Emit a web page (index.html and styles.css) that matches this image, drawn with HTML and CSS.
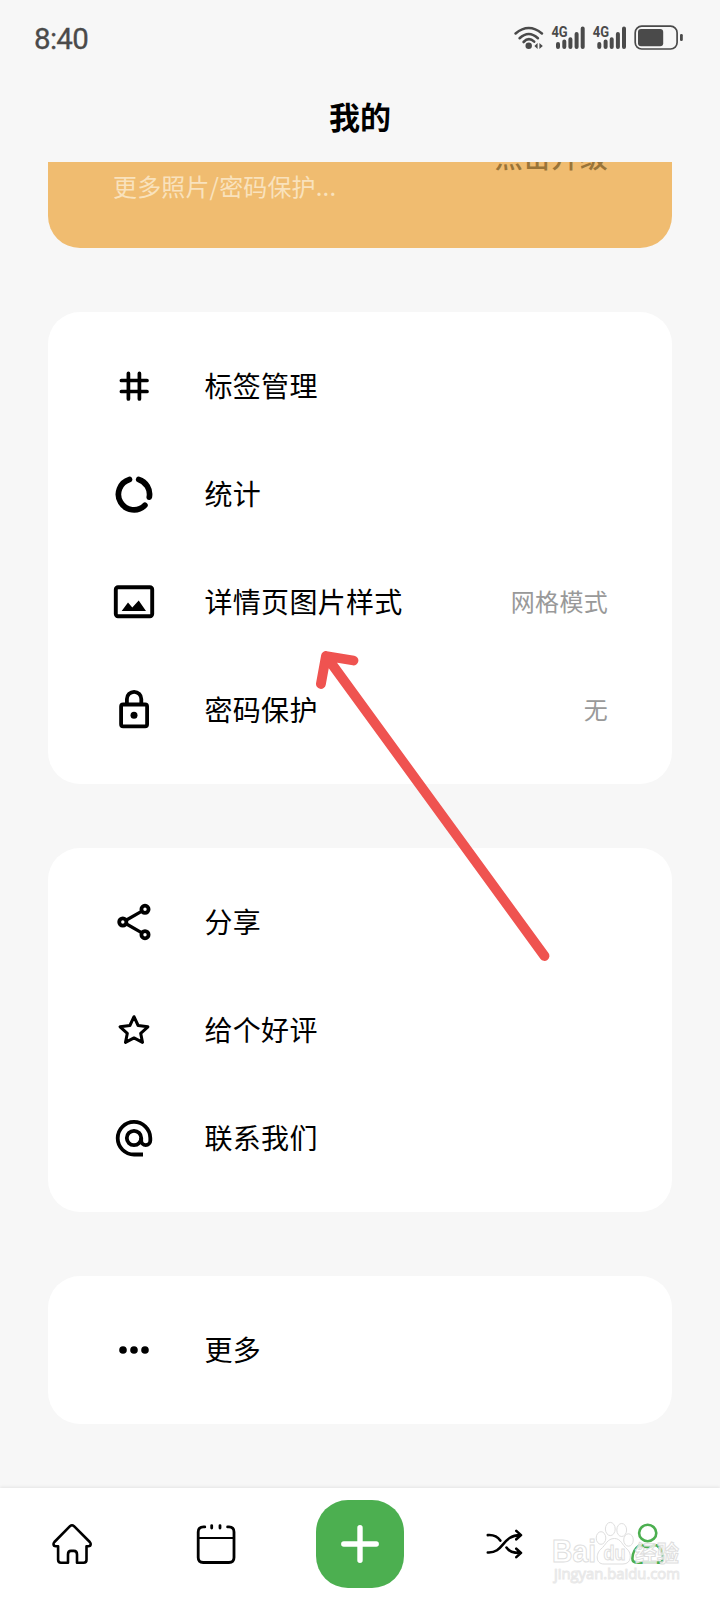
FILE: index.html
```html
<!DOCTYPE html>
<html lang="zh-CN">
<head>
<meta charset="utf-8">
<title>我的</title>
<link rel="stylesheet" href="styles.css">
</head>
<body>
<div class="phone">
  <header class="status">
    <span class="time">8:40</span>
    <svg class="status-icons" width="176" height="32" viewBox="510 22 176 32">
      <g class="s-line">
        <path d="M515.600 33.400Q528.700 22.600 541.900 33.400" stroke-width="2.600"/>
        <path d="M519.600 38.200Q528.700 29.800 537.900 38.200" stroke-width="2.600"/>
        <path d="M523.600 42Q528.700 36.600 534.200 41.600" stroke-width="2.600"/>
      </g>
      <circle cx="528.700" cy="45.800" r="3.200"/>
      <path d="M537.600 43v6l-3.200-3zM539.400 43v6l3.400-3z"/>
      <g id="signal">
        <text class="net" x="551.400" y="37.400" textLength="16.300" lengthAdjust="spacingAndGlyphs">4G</text>
        <g class="s-line" stroke-width="4">
          <path d="M558 43.900V47.100M564.300 41.600V47.100M570.400 39.300V47.100M576.600 34V47.100M582.700 28.600V47.100"/>
        </g>
      </g>
      <use href="#signal" x="41.300"/>
      <rect x="635.200" y="26.200" width="41.900" height="22.800" rx="6.500" fill="none" stroke="#4a4a4a" stroke-width="1.700"/>
      <rect x="638" y="29" width="25.200" height="17.300" rx="3"/>
      <rect x="680" y="34" width="2.800" height="7" rx="1.300"/>
    </svg>
  </header>
  <h1 class="title">我的</h1>

  <main class="scroll">
    <section class="banner">
      <span class="banner-sub">更多照片/密码保护...</span>
      <span class="banner-action">点击升级</span>
    </section>

    <section class="card">
      <div class="row">
        <svg class="icon" viewBox="0 0 48 48"><path stroke-width="3.700" d="M18.400 11.400V37M29.400 11.400V37M11.400 18.500H37M11.400 29.500H37"/></svg>
        <span class="label">标签管理</span>
      </div>
      <div class="row">
        <svg class="icon" viewBox="0 0 48 48"><path stroke-width="5.700" d="M28.700 9.500A15.500 15.500 0 0 1 39.300 27.100M34.900 35.300A15.500 15.500 0 1 1 19.500 9.500"/></svg>
        <span class="label">统计</span>
      </div>
      <div class="row">
        <svg class="icon" viewBox="0 0 48 48"><rect x="5.800" y="9.200" width="36.400" height="29" rx="2.200" stroke-width="3.900"/><path class="solid" d="M11.700 33 18 24.500 22.300 29.500 28.700 22.500 36 33z"/></svg>
        <span class="label">详情页图片样式</span>
        <span class="value">网格模式</span>
      </div>
      <div class="row">
        <svg class="icon" viewBox="0 0 48 48"><g stroke-width="3.800"><rect x="11.100" y="18.500" width="26" height="21.800" rx="2"/><path d="M16.900 18V13a7.200 7.200 0 0 1 14.400 0v5"/></g><circle class="solid" cx="24" cy="29.300" r="3.500"/></svg>
        <span class="label">密码保护</span>
        <span class="value">无</span>
      </div>
    </section>

    <section class="card">
      <div class="row">
        <svg class="icon" viewBox="0 0 48 48"><g stroke-width="3.800"><circle cx="12.800" cy="24" r="3.600"/><circle cx="35" cy="11.300" r="3.600"/><circle cx="35" cy="36.700" r="3.600"/></g><path stroke-width="3.200" d="M16.500 22 31.500 13.400M16.500 26 31.500 34.700"/></svg>
        <span class="label">分享</span>
      </div>
      <div class="row">
        <svg class="icon" viewBox="0 0 48 48"><path stroke-width="3" d="M24 10.700 28.100 19.500 37.900 20.800 30.700 27.400 32.500 36.400 24 31.900 15.500 36.400 17.300 27.400 10.100 20.800 19.900 19.500z"/></svg>
        <span class="label">给个好评</span>
      </div>
      <div class="row">
        <svg class="icon" viewBox="0 0 48 48"><g class="butt" stroke-width="3.800"><circle cx="24" cy="24" r="7.200"/><path d="M33 40.500H24A16.300 16.300 0 1 1 40.300 24V26.500a4.550 4.550 0 0 1-9.100 0V24"/></g></svg>
        <span class="label">联系我们</span>
      </div>
    </section>

    <section class="card">
      <div class="row">
        <svg class="icon" viewBox="0 0 48 48"><g class="solid"><circle cx="13" cy="24" r="3.800"/><circle cx="24" cy="24" r="3.800"/><circle cx="35" cy="24" r="3.800"/></g></svg>
        <span class="label">更多</span>
      </div>
    </section>
  </main>

  <nav class="tabs">
    <a class="tab"><svg class="icon" viewBox="0 0 48 48"><path stroke-width="2.600" d="M20 42.800H13Q10.100 42.800 10.100 39.800V26.300H8Q5.500 26.300 5.500 24Q5.500 23 6.400 22L22 6.200Q24 4.300 26 6.200L41.800 22Q42.700 23 42.700 24Q42.700 26.300 40.200 26.300H38.500V39.800Q38.500 42.800 35.600 42.800H29V34.500Q29 30.900 25.800 30.900H23Q20 30.900 20 34.500V42.800"/></svg></a>
    <a class="tab"><svg class="icon" viewBox="0 0 48 48"><path stroke-width="2.800" d="M12.800 6.900H11.500Q6.200 6.900 6.200 12V37.500Q6.200 42.500 11.200 42.500H37Q42 42.500 42 37.500V12Q42 6.900 37 6.900H35.600M19.700 5.600V8.100M28 5.600V8.100"/><path stroke-width="2.200" d="M6.200 18H42"/></svg></a>
    <a class="tab"><span class="add"><svg class="icon plus" viewBox="0 0 48 48"><path stroke-width="5.400" d="M24 7.800V40.200M7.800 24H40.200"/></svg></span></a>
    <a class="tab"><svg class="icon" viewBox="0 0 48 48"><path stroke-width="2.600" d="M7.800 15.100C14 14.600 17.500 16.500 20.300 20.600M7.800 32.500C24 33.500 22 14.900 40.300 15.100M26.500 27.500C29.500 31.700 32.500 32.900 40.300 32.900M36.300 10.900 41 15.100 36.300 19.300M36.300 28.700 41 32.900 36.300 37.100"/></svg></a>
    <a class="tab active"><svg class="icon" viewBox="0 0 48 48"><g stroke-width="2.600"><ellipse cx="23.700" cy="13" rx="8.600" ry="8.200"/><path d="M15.500 25.200Q8.500 30 8.400 38.500Q8.400 42.600 13 42.600H35Q39.100 42.600 39.100 38.500Q39 29.500 32.500 25.200L30 25Q24 29.500 18 25z"/></g></svg></a>
  </nav>

  <svg class="arrow" viewBox="310 640 250 330" width="250" height="330"><path d="M544.500 956 326 656M353.500 660.500 326 656 320.900 684"/></svg>

  <svg class="watermark" viewBox="548 1516 140 70" width="140" height="70">
    <text class="wm-brand" x="552" y="1562" textLength="44" lengthAdjust="spacingAndGlyphs">Bai</text>
    <g class="wm-paw">
      <ellipse cx="601" cy="1538" rx="4.800" ry="6.300"/>
      <ellipse cx="610.300" cy="1529" rx="4.900" ry="6.600"/>
      <ellipse cx="621.700" cy="1530" rx="4.900" ry="6.500"/>
      <ellipse cx="628.500" cy="1540" rx="4.800" ry="6.200"/>
      <path d="M614.500 1538.500C621 1538.500 622 1545 627 1549C632 1553 632 1564 623 1564H604C595 1564 596 1553 601 1549C606 1545 607 1538.500 614.500 1538.500z"/>
    </g>
    <text class="wm-du" x="603.500" y="1560" textLength="22" lengthAdjust="spacingAndGlyphs">du</text>
    <text class="wm-cn" x="635" y="1561" textLength="44" lengthAdjust="spacingAndGlyphs">经验</text>
    <text class="wm-url" x="554" y="1579" textLength="126" lengthAdjust="spacingAndGlyphs">jingyan.baidu.com</text>
  </svg>
</div>
</body>
</html>
```

FILE: styles.css
```css
* {
  box-sizing: border-box;
}

body {
  margin: 0;
  font-family: "Noto Sans CJK SC", sans-serif;
  color: #000;
}

.phone {
  position: relative;
  display: flex;
  flex-direction: column;
  width: 720px;
  height: 1600px;
  overflow: hidden;
  background: #f7f7f7;
}

.status {
  display: flex;
  justify-content: space-between;
  align-items: center;
  height: 76px;
  padding: 0 34px;
}

.time {
  font: 400 29.5px/36px Roboto, sans-serif;
  letter-spacing: -0.7px;
  color: #4a4a4a;
  -webkit-text-stroke: 0.3px #4a4a4a;
  padding-top: 2px;
}

.status-icons {
  fill: #4a4a4a;
}

.s-line {
  fill: none;
  stroke: #4a4a4a;
  stroke-linecap: round;
}

.net {
  font: 700 14.5px Roboto, sans-serif;
}

.title {
  height: 86px;
  margin: 0;
  font-size: 31px;
  font-weight: 700;
  line-height: 80px;
  text-align: center;
}

.scroll {
  flex: 1;
  display: flex;
  flex-direction: column;
  gap: 64px;
  min-height: 0;
  padding: 0 48px;
  overflow: hidden;
}

.banner {
  display: flex;
  flex: none;
  justify-content: space-between;
  align-items: center;
  height: 180px;
  margin-top: -94px;
  padding: 0 64px 0 65px;
  border-radius: 32px;
  background: #f0bc70;
}

.banner-sub {
  padding-top: 56px;
  font-size: 24px;
  line-height: 36px;
  letter-spacing: 0.15px;
  color: #f9e2bd;
}

.banner-action {
  padding-bottom: 5px;
  font-size: 28px;
  font-weight: 500;
  line-height: 40px;
  letter-spacing: 0.3px;
  color: #997439;
}

.card {
  flex: none;
  padding: 20px 64px 20px 62px;
  border-radius: 32px;
  background: #fff;
}

.row {
  display: flex;
  align-items: center;
  height: 108px;
}

.icon {
  flex: none;
  width: 48px;
  height: 48px;
  fill: none;
  stroke: #000;
  stroke-linecap: round;
  stroke-linejoin: round;
}

.solid {
  fill: #000;
  stroke: none;
}

.butt {
  stroke-linecap: butt;
}

.label {
  flex: 1;
  margin-left: 46.5px;
  padding-bottom: 2px;
  font-size: 28px;
  line-height: 40px;
  letter-spacing: 0.3px;
}

.value {
  padding-bottom: 2px;
  font-size: 24px;
  line-height: 36px;
  letter-spacing: 0.3px;
  color: #999;
}

.tabs {
  display: grid;
  grid-template-columns: repeat(5, 1fr);
  height: 112px;
  background: #fff;
  box-shadow: 0 -1px 3px rgba(0, 0, 0, 0.08);
}

.tab {
  display: flex;
  justify-content: center;
  align-items: center;
}

.add {
  display: flex;
  justify-content: center;
  align-items: center;
  width: 88px;
  height: 88px;
  border-radius: 32px;
  background: #4caf50;
}

.plus {
  stroke: #fff;
}

.active .icon {
  stroke: #4caf50;
}

.arrow {
  position: absolute;
  left: 310px;
  top: 640px;
  fill: none;
  stroke: #ef5350;
  stroke-width: 9.8px;
  stroke-linecap: round;
  stroke-linejoin: round;
}

.watermark {
  position: absolute;
  left: 548px;
  top: 1516px;
}

.watermark text,
.wm-paw {
  fill: #fff;
  stroke: #dedede;
  stroke-width: 1px;
}

.wm-brand {
  font: 700 31px "Liberation Sans", sans-serif;
}

.wm-du {
  font: 700 20px "Liberation Sans", sans-serif;
}

.watermark .wm-cn {
  font: 700 22px "Noto Sans CJK SC", sans-serif;
  fill: rgba(255, 255, 255, 0.75);
}

.watermark .wm-url {
  font: 400 15px "Open Sans", sans-serif;
  stroke: #e8e8e8;
}
```
